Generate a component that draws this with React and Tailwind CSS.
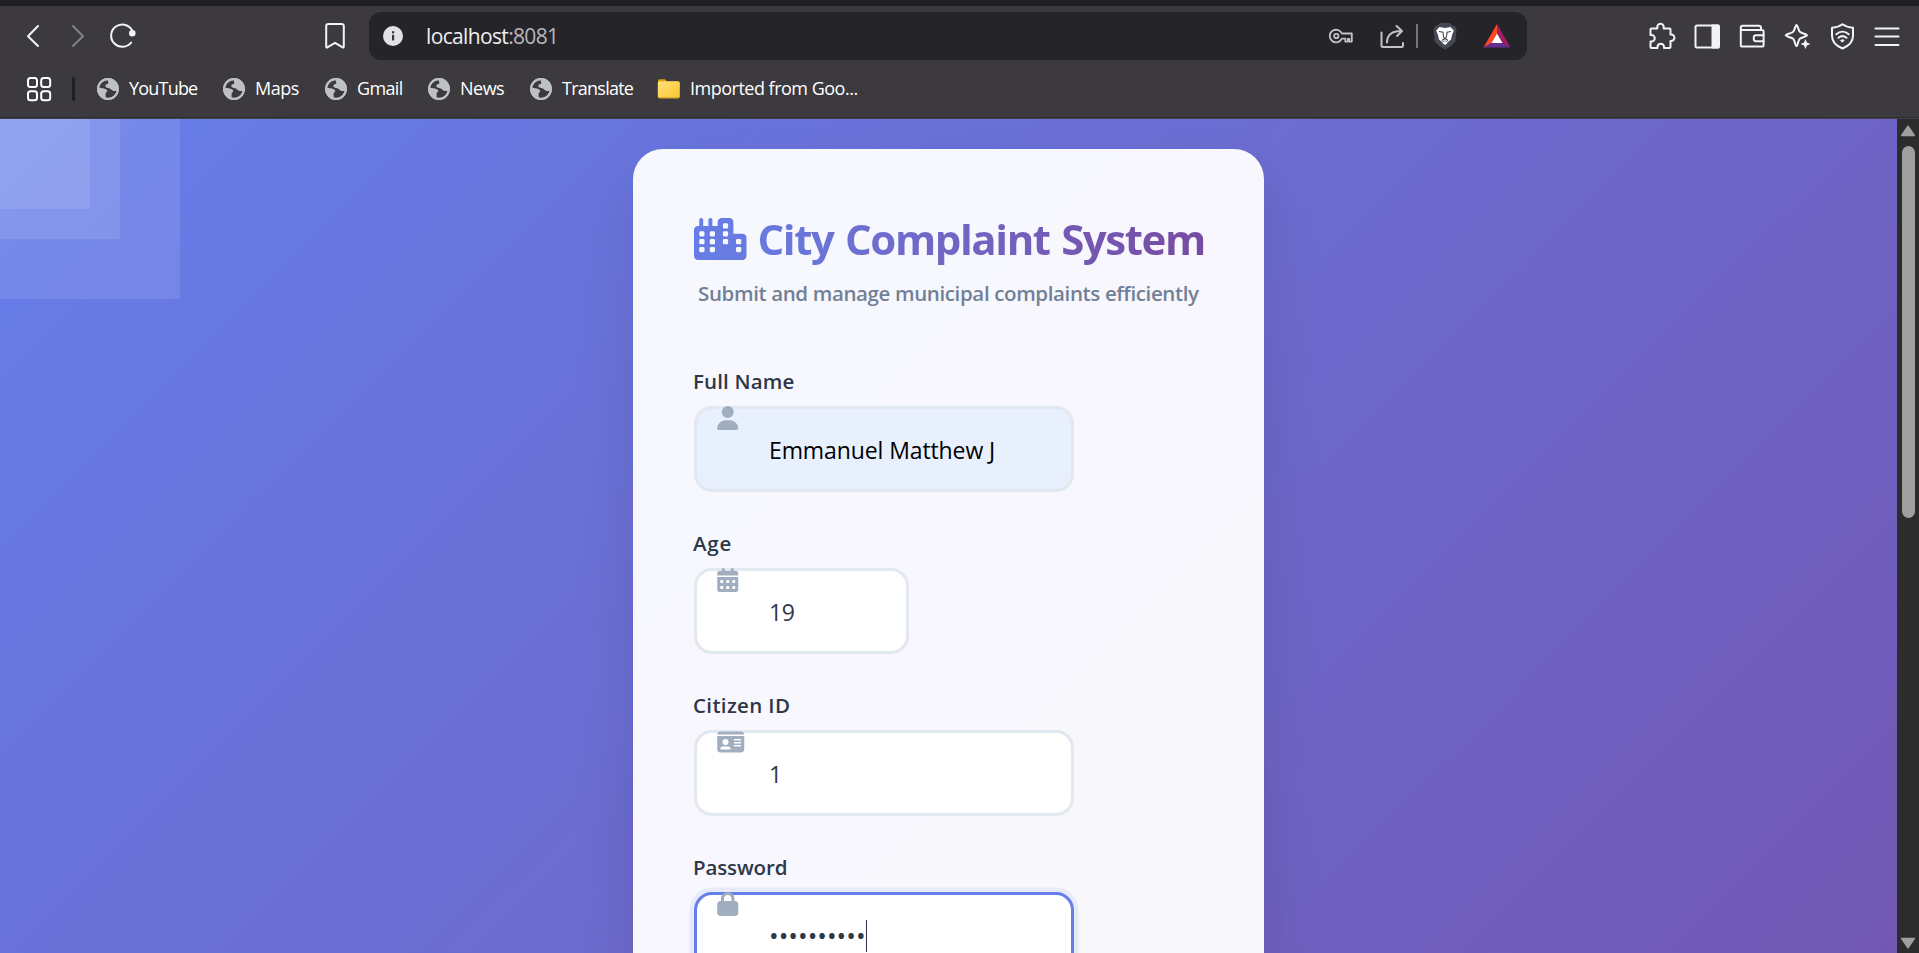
import React from "react";
import { FaUser, FaCalendarDays, FaIdCard, FaLock } from "react-icons/fa6";

const line = { fill: "none", stroke: "currentColor", strokeWidth: 2, strokeLinecap: "round", strokeLinejoin: "round" };

function Icon({ children, size = 28, className = "" }) {
  return (
    <svg width={size} height={size} viewBox={`0 0 ${size} ${size}`} className={`block shrink-0 ${className}`} {...line}>
      {children}
    </svg>
  );
}

function Globe() {
  return (
    <svg width="22" height="22" viewBox="0 0 22 22" className="block shrink-0">
      <circle cx="11" cy="11" r="10.9" fill="#bdc1c6" />
      <path
        d="M10.6 2.2C6.3 2.3 2.7 5.500 2.200 9.800L5.500 10.300C7.600 10.600 9 11 10.100 12.400C10.500 13 10.100 13.600 9.600 14.100C8.900 14.700 8.500 15.300 8.600 16.500V19.500C9.300 19.700 10.100 19.800 10.900 19.800C15.300 19.800 18.700 17 19.600 13C18.300 13.300 16.800 13 15.400 12.400C14 11.800 13.800 10.700 12.300 10.300C10.300 9.900 8.500 9.400 8.300 7.900C8.200 6.700 9.400 6.300 10.600 6C11.500 5.700 11.600 4.200 10.600 2.200Z"
        fill="#3c3a3f"
      />
      <path d="M2.200 10.200C2 14 4.300 17.600 8 19.200V16.200C5.600 15.500 6 13.500 2.200 10.200Z" fill="#bdc1c6" />
      <circle cx="11" cy="11" r="9.900" fill="none" stroke="#bdc1c6" strokeWidth="2" />
    </svg>
  );
}

function Folder() {
  return (
    <svg width="23" height="21" viewBox="0 0 23 21" className="block shrink-0">
      <defs>
        <linearGradient id="folder" x1="0" y1="0" x2="1" y2="1">
          <stop offset="0" stopColor="#ffe27a" />
          <stop offset="1" stopColor="#fcc52f" />
        </linearGradient>
      </defs>
      <path d="M1 3C1 2 1.700 1.300 2.700 1.300H8L10 3.500H21C22 3.500 22.500 4 22.500 5V10H1Z" fill="#dfa00f" />
      <rect x="0.800" y="3.300" width="22" height="17" rx="2" fill="url(#folder)" />
      <path d="M1.500 19.800H22" stroke="#dca220" strokeWidth="1" />
    </svg>
  );
}

const bookmarks = [
  { name: "YouTube", width: "w-[126px]", track: "tracking-[-0.8px]" },
  { name: "Maps", width: "w-[102px]", track: "tracking-[-0.5px]" },
  { name: "Gmail", width: "w-[103px]", track: "tracking-[-0.65px]" },
  { name: "News", width: "w-[102px]", track: "tracking-[-0.5px]" },
  { name: "Translate", width: "w-[127px]", track: "tracking-[-0.75px]" },
];

function Toolbar() {
  return (
    <div className="flex h-[60px] items-center text-[#f3f2f5]">
      <Icon size={24} className="ml-[21px]">
        <path d="M17 2L7 12.300L17 22" />
      </Icon>
      <Icon size={24} className="ml-[21px] text-[#828186]">
        <path d="M7 2L17 12.300L7 22" />
      </Icon>
      <Icon className="ml-[19px]">
        <path d="M22.200 20.500A11.200 11.200 0 1 1 23 8" />
        <circle cx="23.300" cy="11.300" r="2.300" fill="currentColor" />
      </Icon>
      <Icon className="ml-[184px]">
        <path d="M7.500 2H20.500Q22.800 2 22.800 4.300V24.500Q22.800 26.200 21.300 25.200L14 20.800L6.700 25.200Q5.200 26.200 5.200 24.500V4.300Q5.200 2 7.500 2Z" />
      </Icon>

      <div className="ml-5 flex h-12 w-[1158px] items-center rounded-xl bg-[#252428]">
        <svg width="20" height="20" viewBox="0 0 20 20" className="ml-[14px] block shrink-0">
          <circle cx="10" cy="10" r="10" fill="#e3e1e8" />
          <rect x="9" y="8.800" width="2.200" height="5.600" fill="#3a393e" />
          <rect x="9" y="5.200" width="2.200" height="2.200" fill="#3a393e" />
        </svg>
        <span className="ml-[23px] w-[181px] whitespace-nowrap text-[21px] leading-[28px] tracking-[-0.65px] text-[#efeef2]">
          localhost<span className="text-[#b8b6bd]">:8081</span>
        </span>
        <svg width="26" height="16" viewBox="0 0 26 16" className="ml-[721px] block shrink-0 text-[#c3c2c8]" {...line} strokeWidth="1.800">
          <circle cx="8.300" cy="8" r="2.200" />
          <path d="M13.800 5.500A6.300 6.300 0 1 0 13.800 10.600H17.300V13.600H19.800V10.800H21.300V13.600H23.800V5.500Z" />
        </svg>
        <Icon className="ml-6 text-[#c3c2c8]">
          <path d="M3.500 10.500V23.500Q3.500 25 5 25H23.500Q25 25 25 23.500V21" />
          <path d="M9 20.500C9 13.500 13.500 8.800 23.500 9M18.500 4L24 9L19 14" />
        </Icon>
        <div className="ml-[10px] h-6 w-[2px] bg-[#77767b]" />
        <svg width="24" height="28" viewBox="0 0 24 28" className="ml-[15px] block shrink-0">
          <path d="M7 1L17 1L19.500 3.500L22 4L23.500 8L22.300 19.500L18 24L12 27.500L6 24L1.700 19.500L0.500 8L2 4L4.500 3.500Z" fill="#464856" />
          <path d="M6.500 5L12 6L17.500 5L20.800 8.500L19 13L18 17.500L15 20L12 18.500L9 20L6 17.500L5 13L3.200 8.500Z" fill="#fff" />
          <path d="M12 19L15 20.800L12 23L9 20.800Z" fill="#fff" />
          <path d="M6 9.500L10 10.300L10.200 13M18 9.500L14 10.300L13.800 13M10.300 13L11 16L12 16.500L13 16L13.700 13M9 18.500L12 16.500L15 18.500" stroke="#464856" strokeWidth="1.100" fill="none" />
        </svg>
        <svg width="28" height="24" viewBox="0 0 28 24" className="ml-[26px] block shrink-0">
          <path d="M14 0V9.500L8.500 19L0.500 23.500Z" fill="#ff4724" />
          <path d="M14 0L27.500 23.500L19.500 19L14 9.500Z" fill="#9e1f63" />
          <path d="M0.500 23.500H27.500L19.500 19H8.500Z" fill="#662d91" />
          <path d="M14 9.500L19.500 19H8.500Z" fill="#fff" />
        </svg>
      </div>

      <div className="ml-auto mr-[18px] flex items-center gap-[17px]">
        <Icon>
          <path d="M3.500 6.500H9.300V5A3.200 3.200 0 0 1 15.700 5V6.500H21.500Q22.500 6.500 22.500 7.500V12.500H23.200A3 3 0 0 1 23.200 19H22.500V25Q22.500 26 21.500 26H16V24.500A3.300 3.300 0 0 0 9.500 24.500V26H3.500Q2.500 26 2.500 25V19.500H3.500A3 3 0 0 0 3.500 13H2.500V7.500Q2.500 6.500 3.500 6.500Z" />
        </Icon>
        <Icon>
          <rect x="2.500" y="3.500" width="23.500" height="22" rx="1.500" />
          <path d="M19.500 3.500H25.500V25.500H19.500Z" fill="currentColor" />
        </Icon>
        <Icon>
          <path d="M23 8V6Q23 3.800 20.800 3.800H4.500Q2.800 3.800 2.800 5.500V23Q2.800 24.600 4.500 24.600H24Q25.600 24.600 25.600 23V9.500Q25.600 8 24 8H4.500Q2.800 7.800 2.800 6" />
          <path d="M25.600 13.200H18Q15.800 13.200 15.800 15.300V17Q15.800 19.300 18 19.300H25.600" />
        </Icon>
        <Icon>
          <path d="M13.500 3C14.700 3 15 7.500 16.700 9.600C18.300 11.500 24 12 24 13.300C24 14.700 18.500 15 16.700 16.900C15 18.800 14.700 24 13.500 24C12.200 24 12.100 19 10.300 16.900C8.500 15 2.800 14.700 2.800 13.300C2.800 12 8.500 11.600 10.300 9.600C12.100 7.600 12.200 3 13.500 3Z" />
          <path d="M22.500 17L23.900 20.600L27.500 22L23.900 23.500L22.500 27L21 23.500L17.500 22L21 20.600Z" fill="currentColor" stroke="#3c3a3f" strokeWidth="1" paintOrder="stroke" />
        </Icon>
        <Icon>
          <path d="M14.500 2.300C17.500 4.500 21 5.600 25 5.800V14C25 19.500 21 23.700 14.500 26.500C8 23.700 4 19.500 4 14V5.800C8 5.600 11.500 4.500 14.500 2.300Z" />
          <path d="M8.300 12.300C12 9 17 9 20.700 12.300M10.500 15.800C13 13.700 16 13.700 18.500 15.800" />
          <path d="M12.800 18.300C13.900 17.600 15.100 17.600 16.200 18.300L14.500 20Z" fill="currentColor" strokeWidth="1" />
        </Icon>
        <Icon>
          <path d="M2.500 6.500H25.500M2.500 14.500H25.500M2.500 23H25.500" />
        </Icon>
      </div>
    </div>
  );
}

function BookmarksBar() {
  return (
    <div className="flex h-[51px] items-center text-[18px] leading-6 text-white">
      <Icon size={26} className="mt-[-6px] ml-[26px]">
        <rect x="2" y="2" width="9" height="9" rx="2.500" />
        <rect x="15.200" y="2" width="9" height="9" rx="2.500" />
        <rect x="2" y="15.200" width="9" height="9" rx="2.500" />
        <rect x="15.200" y="15.200" width="9" height="9" rx="2.500" />
      </Icon>
      <div className="mt-[-6px] ml-5 h-6 w-[3px] rounded-full bg-[#1f1e22]" />
      <div className="mt-[-6px] ml-[22px] flex items-center">
        {bookmarks.map((b) => (
          <div key={b.name} className={`flex items-center gap-[10px] ${b.width}`}>
            <Globe />
            <span className={`pb-[2px] ${b.track}`}>{b.name}</span>
          </div>
        ))}
        <div className="flex items-center gap-[10px]">
          <Folder />
          <span className="whitespace-nowrap pb-[2px] tracking-[-0.500px]">Imported from Goo...</span>
        </div>
      </div>
    </div>
  );
}

function CityIcon() {
  return (
    <svg width="52.500" height="42" viewBox="0 0 640 512" className="block shrink-0">
      <defs>
        <linearGradient id="city" gradientUnits="userSpaceOnUse" x1="0" y1="0" x2="640" y2="512">
          <stop offset="0" stopColor="#667eea" />
          <stop offset="1" stopColor="#687adf" />
        </linearGradient>
      </defs>
      <path
        fill="url(#city)"
        d="M480 48c0-26.500-21.500-48-48-48H336c-26.500 0-48 21.500-48 48V96H224V24c0-13.300-10.700-24-24-24s-24 10.700-24 24V96H112V24c0-13.300-10.700-24-24-24S64 10.700 64 24V96H48C21.500 96 0 117.500 0 144v96V464c0 26.500 21.500 48 48 48H304h32 96H592c26.500 0 48-21.500 48-48V240c0-26.500-21.500-48-48-48H480V48zm96 320v32c0 8.800-7.200 16-16 16H528c-8.800 0-16-7.200-16-16V368c0-8.800 7.200-16 16-16h32c8.800 0 16 7.200 16 16zM240 416H208c-8.800 0-16-7.200-16-16V368c0-8.800 7.200-16 16-16h32c8.800 0 16 7.200 16 16v32c0 8.800-7.200 16-16 16zM128 400c0 8.800-7.200 16-16 16H80c-8.800 0-16-7.200-16-16V368c0-8.800 7.200-16 16-16h32c8.800 0 16 7.200 16 16v32zM560 256c8.800 0 16 7.200 16 16v32c0 8.800-7.200 16-16 16H528c-8.800 0-16-7.200-16-16V272c0-8.800 7.200-16 16-16h32zM256 176v32c0 8.800-7.200 16-16 16H208c-8.800 0-16-7.200-16-16V176c0-8.800 7.200-16 16-16h32c8.800 0 16 7.200 16 16zM112 160c8.800 0 16 7.200 16 16v32c0 8.800-7.200 16-16 16H80c-8.800 0-16-7.200-16-16V176c0-8.800 7.200-16 16-16h32zM256 304c0 8.800-7.200 16-16 16H208c-8.800 0-16-7.200-16-16V272c0-8.800 7.200-16 16-16h32c8.800 0 16 7.200 16 16v32zM112 320H80c-8.800 0-16-7.200-16-16V272c0-8.800 7.200-16 16-16h32c8.800 0 16 7.200 16 16v32c0 8.800-7.200 16-16 16zm304-48v32c0 8.800-7.200 16-16 16H368c-8.800 0-16-7.200-16-16V272c0-8.800 7.200-16 16-16h32c8.800 0 16 7.200 16 16zM400 64c8.800 0 16 7.200 16 16v32c0 8.800-7.200 16-16 16H368c-8.800 0-16-7.200-16-16V80c0-8.800 7.200-16 16-16h32zm16 112v32c0 8.800-7.200 16-16 16H368c-8.800 0-16-7.200-16-16V176c0-8.800 7.200-16 16-16h32c8.800 0 16 7.200 16 16z"
      />
    </svg>
  );
}

function Field({ label, labelClass, icon: FieldIcon, iconClass = "w-[21.500px]", boxClass, children }) {
  return (
    <div>
      <div className={`-ml-px mb-[9px] h-[31px] text-[20.500px] font-semibold leading-[31px] text-[#2d3748] ${labelClass}`}>{label}</div>
      <div className={`relative flex h-[86px] items-center rounded-[18px] border-[3px] pt-[2px] pl-[72px] text-[23px] ${boxClass}`}>
        <FieldIcon className={`absolute -top-[3px] left-[20px] h-6 text-[#a0aec0] ${iconClass}`} />
        {children}
      </div>
    </div>
  );
}

function Card() {
  return (
    <div className="mt-[30px] h-[1660px] w-[631px] shrink-0 rounded-[30px] bg-white/95 pt-[60px] pl-[61px] shadow-[0_30px_60px_rgba(0,0,0,0.1)]">
      <div className="flex h-[60px] items-center gap-[11px]">
        <CityIcon />
        <h1 className="whitespace-nowrap bg-linear-to-r from-[#687adf] to-[#764ba2] bg-clip-text text-[42px] font-bold leading-[60px] tracking-[-1.420px] text-transparent [word-spacing:2px]">
          City Complaint System
        </h1>
      </div>
      <p className="mt-2 h-8 whitespace-nowrap pl-[4px] text-[20.500px] font-semibold leading-8 tracking-[-0.370px] text-[#718096]">
        Submit and manage municipal complaints efficiently
      </p>
      <div className="mt-[57px] flex flex-col gap-9">
        <Field label="Full Name" labelClass="tracking-[0.150px]" icon={FaUser} boxClass="w-[380px] border-[#e2e8f0] bg-[#e8f0fe] text-black">
          <span className="tracking-[-0.100px]">Emmanuel Matthew J</span>
        </Field>
        <Field label="Age" labelClass="tracking-[0.800px]" icon={FaCalendarDays} boxClass="w-[215px] border-[#e2e8f0] bg-white text-[#2d3748]">
          <span className="tracking-[-0.300px]">19</span>
        </Field>
        <Field label="Citizen ID" labelClass="tracking-[0.350px]" icon={FaIdCard} iconClass="w-[27.500px]" boxClass="w-[380px] border-[#e2e8f0] bg-white text-[#2d3748]">
          <span>1</span>
        </Field>
        <Field
          label="Password"
          labelClass="tracking-[-0.120px]"
          icon={FaLock}
          boxClass="w-[380px] border-[#667eea] bg-white text-[#2d3748] shadow-[0_0_0_4.5px_rgba(102,126,234,0.1)]"
        >
          <span className="text-[25.700px]">••••••••••</span>
          <span className="-mt-px h-8 w-px bg-[#2d3748]" />
        </Field>
      </div>
    </div>
  );
}

function Scrollbar() {
  return (
    <div className="flex w-[22px] shrink-0 flex-col items-center bg-[#2c2c2c] pt-[6px] pb-1">
      <svg width="16" height="12" viewBox="0 0 16 12" className="block">
        <path d="M8 1.200L14.300 10.500H1.700Z" fill="#9f9f9f" stroke="#9f9f9f" strokeWidth="1.500" strokeLinejoin="round" />
      </svg>
      <div className="mt-[9px] h-[372px] w-[13px] rounded-full bg-[#9f9f9f]" />
      <svg width="16" height="12" viewBox="0 0 16 12" className="mt-auto block">
        <path d="M8 10.800L14.300 1.500H1.700Z" fill="#9f9f9f" stroke="#9f9f9f" strokeWidth="1.500" strokeLinejoin="round" />
      </svg>
    </div>
  );
}

export default function App() {
  return (
    <div className="flex h-[953px] w-[1919px] flex-col overflow-hidden bg-[#3c3a3f] font-['Open_Sans','Noto_Sans',sans-serif]">
      <div className="h-[6px] shrink-0 bg-[#201f25]" />
      <Toolbar />
      <BookmarksBar />
      <div className="h-[2px] shrink-0 border-t border-[#2e2d31] bg-[#444247]" />
      <div className="flex h-[834px] shrink-0">
        <div className="relative h-[834px] w-[1897px] overflow-hidden">
          <div className="flex h-[1782px] justify-center bg-[linear-gradient(135deg,#667eea_0%,#764ba2_100%)]">
            <Card />
          </div>
          <div className="absolute top-0 left-0 size-[180px] bg-white/10" />
          <div className="absolute top-0 left-0 size-[120px] bg-white/10" />
          <div className="absolute top-0 left-0 size-[90px] bg-white/10" />
        </div>
        <Scrollbar />
      </div>
    </div>
  );
}
